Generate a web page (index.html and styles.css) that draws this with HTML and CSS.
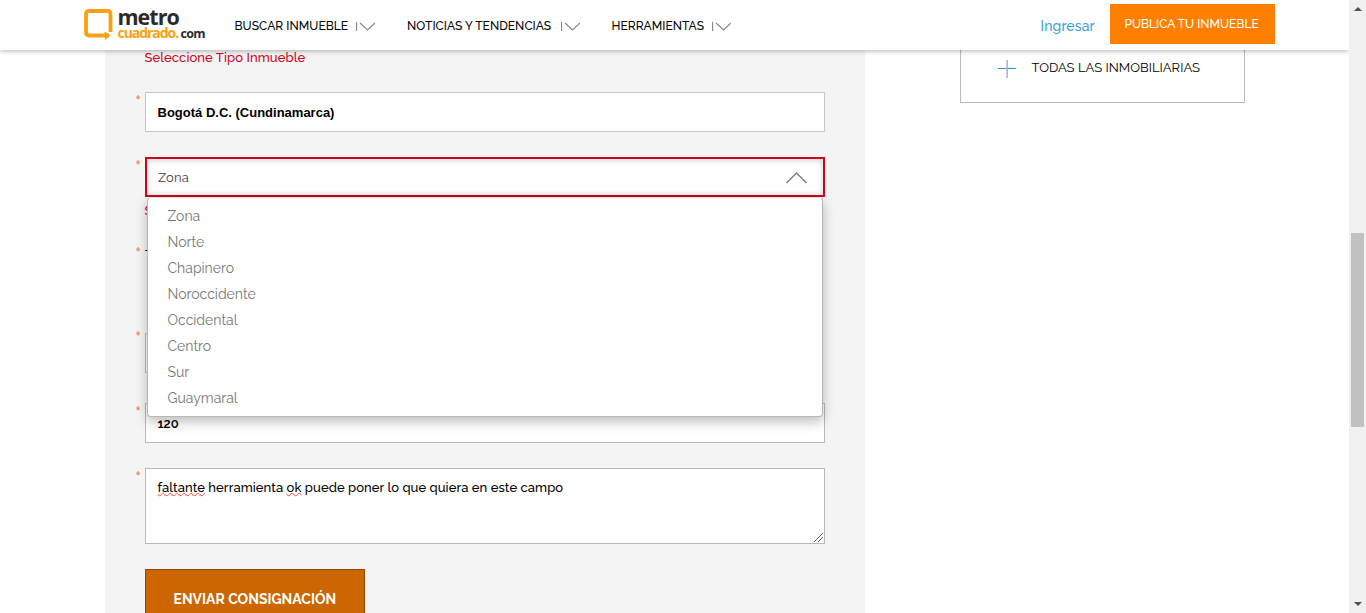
FILE: index.html
```html
<!DOCTYPE html>
<html lang="es">
<head>
<meta charset="utf-8">
<title>Metrocuadrado</title>
<link rel="stylesheet" href="styles.css">
</head>
<body>
<div class="page">
  <header class="header">
    <a class="logo">
      <svg class="logo-mark" width="30" height="32" viewBox="0 0 30 32"><path d="M25 27.500H5Q2 27.500 2 24.500V6Q2 3 5 3H23.500Q26.500 3 26.500 6V24" fill="none" stroke="#f9a113" stroke-width="3.800"/><path d="M20.500 23.500L26.500 27.500L21 32Z" fill="#f9a113"/></svg>
      <span class="logo-text"><span class="logo-top">metro</span><span class="logo-bottom"><span class="logo-orange">cuadrado.</span><span class="logo-com">com</span></span></span>
    </a>
    <nav class="nav">
      <a class="nav-item"><span class="nav-label nav-buscar">BUSCAR INMUEBLE</span><svg class="nav-arrow" width="19" height="10" viewBox="0 0 19 10"><path d="M.5 0V9M4 1L11.500 8L19 1" fill="none" stroke="#888" stroke-width="1.200"/></svg></a>
      <a class="nav-item"><span class="nav-label nav-noticias">NOTICIAS Y TENDENCIAS</span><svg class="nav-arrow" width="19" height="10" viewBox="0 0 19 10"><path d="M.5 0V9M4 1L11.500 8L19 1" fill="none" stroke="#888" stroke-width="1.200"/></svg></a>
      <a class="nav-item"><span class="nav-label nav-herramientas">HERRAMIENTAS</span><svg class="nav-arrow" width="19" height="10" viewBox="0 0 19 10"><path d="M.5 0V9M4 1L11.500 8L19 1" fill="none" stroke="#888" stroke-width="1.200"/></svg></a>
    </nav>
    <a class="login">Ingresar</a>
    <a class="publish">PUBLICA TU INMUEBLE</a>
  </header>
  <main class="content">
    <form class="form">
      <p class="error first-error">Seleccione Tipo Inmueble</p>
      <div class="row"><span class="req">*</span><div class="field city">Bogotá D.C. (Cundinamarca)</div></div>
      <div class="row zone-row"><span class="req">*</span>
        <div class="field zone"><span class="zone-value">Zona</span><svg width="23" height="13" viewBox="0 0 23 13"><path d="M1.500 12L11.500 2L21.500 12" fill="none" stroke="#7b7f8a" stroke-width="1.500"/></svg></div>
        <ul class="menu">
          <li>Zona</li><li>Norte</li><li>Chapinero</li><li>Noroccidente</li><li>Occidental</li><li>Centro</li><li>Sur</li><li>Guaymaral</li>
        </ul>
      </div>
      <p class="error zone-error">S</p>
      <div class="row type-row"><span class="req">*</span><span class="type-label">T</span></div>
      <div class="row price-row"><span class="req">*</span><div class="field price"></div></div>
      <div class="row area-row"><span class="req">*</span><div class="field"><span class="area-value">120</span></div></div>
      <div class="row"><span class="req">*</span><div class="field comments"><p class="comment-text"><span class="misspelled">faltante</span> herramienta <span class="misspelled">ok</span> puede poner lo que quiera en este campo</p><svg class="grip" width="9" height="9" viewBox="0 0 9 9"><path d="M0 9L9 0M4 9L9 4" stroke="#555" fill="none" stroke-width=".9"/></svg></div></div>
      <div class="submit"><span>ENVIAR CONSIGNACIÓN</span></div>
    </form>
    <aside class="agencies"><svg width="18" height="18" viewBox="0 0 18 18"><path d="M0 8.500H18" stroke="#29a0cf"/><path d="M8.500 0V18" stroke="#c9b5d3" stroke-opacity=".8"/><path d="M9.500 0V18" stroke="#61b3d4" stroke-opacity=".7"/></svg><span>TODAS LAS INMOBILIARIAS</span></aside>
  </main>
</div>
<div class="scrollbar"><span class="arrow-up"></span><span class="thumb"></span><span class="arrow-down"></span></div>
</body>
</html>
```

FILE: styles.css
```css
* { box-sizing: border-box; }
body { margin: 0; height: 613px; overflow: hidden; display: flex; background: #fff; color: #000; font-family: Raleway, Lato, sans-serif; font-size: 13px; }
p, ul { margin: 0; padding: 0; list-style: none; }
svg { display: block; flex: none; }
span, a { white-space: nowrap; }
.page { width: 1349px; height: 613px; overflow: hidden; }
.header { position: relative; z-index: 5; height: 50px; display: flex; background: #fff; box-shadow: 0 1px 5px rgba(0,0,0,.3); padding-left: 83.500px; }
.logo { display: flex; width: 151px; padding-top: 7.500px; }
.logo-text { display: flex; flex-direction: column; padding-left: 4px; font-family: "Open Sans", sans-serif; font-weight: 700; }
.logo-top { font-size: 21.500px; line-height: 18px; color: #2b2a29; letter-spacing: -1px; }
.logo-bottom { display: flex; align-items: baseline; font-size: 14px; line-height: 14px; letter-spacing: -1.050px; }
.logo-orange { color: #f9a113; width: 63px; }
.logo-com { color: #2b2a29; font-size: 12.500px; letter-spacing: -.7px; }
.nav { display: flex; gap: 32px; width: 806px; font-size: 12px; font-weight: 500; }
.nav-item { display: flex; height: 50px; padding-top: 17px; line-height: 19px; }
.nav-label { letter-spacing: .04px; }
.nav-arrow { margin: 5px 0 0 8px; }
.nav-buscar { width: 113.500px; }
.nav-noticias { width: 145.500px; }
.nav-herramientas { width: 92px; }
.login { width: 69.500px; padding-top: 16px; font-size: 14px; font-weight: 500; line-height: 20px; letter-spacing: .08px; color: #3d9fd1; }
.publish { width: 165px; height: 40px; margin-top: 4px; padding-left: 14.500px; font-size: 12px; font-weight: 500; line-height: 40px; color: #fff; background: #ff8000; }
.content { display: flex; align-items: flex-start; padding-left: 105px; }
.form { width: 760px; height: 563px; background: #f4f4f4; padding-left: 40px; }
.error { color: #d0021b; font-weight: 500; line-height: 16px; letter-spacing: .09px; }
.first-error { height: 42px; margin-left: -.5px; }
.row { position: relative; height: 65px; display: flex; }
.req { margin-left: -9px; width: 9px; padding-top: 1px; font: 700 8px/12px "Open Sans", sans-serif; color: #ff8055; }
.field { width: 680px; height: 40px; border: 1px solid #b9b9b9; background: #fff; padding-left: 11.500px; line-height: 39px; font-weight: 700; }
.city { font-family: "Liberation Sans", Arial, sans-serif; border-color: #c6c6c6; }
.price { width: 670px; }
.area-value { font-weight: 600; }
.zone-row { height: 46px; z-index: 3; }
.zone { border: 2px solid #d0021b; padding: 0 15px 0 11px; display: flex; align-items: center; justify-content: space-between; box-shadow: inset 0 1px 6px rgba(0,0,0,.2); font-weight: 400; color: #444; letter-spacing: .15px; }
.menu { position: absolute; left: 2px; top: 40px; width: 676px; height: 220px; padding: 5px 0 0 19.500px; border: 1px solid #b8b8b8; border-top-color: #ddd; border-radius: 4px; background: #fff; box-shadow: 0 5px 12px rgba(0,0,0,.25); }
.menu li { height: 26px; line-height: 26px; font-weight: 400; font-size: 14px; color: #777; }
.zone-error { height: 41px; margin-left: -.5px; }
.type-row { height: 89px; }
.type-label { line-height: 22px; font-weight: 500; }
.price-row { height: 70px; }
.price-row .req { margin-top: -5px; }
.comments { height: 76px; position: relative; font-weight: 500; letter-spacing: .07px; }
.comment-text { line-height: 16px; padding-top: 11px; white-space: nowrap; }
.misspelled { text-decoration: underline wavy #f44 .7px; text-decoration-skip-ink: none; text-underline-offset: 0; }
.grip { position: absolute; right: 1px; bottom: 1px; }
.submit { width: 220px; height: 60px; margin-top: 36px; border: 1px solid #904800; background: #c60; color: #fff; font-weight: 700; font-size: 14px; line-height: 58px; padding-left: 27.500px; }
.agencies { width: 285px; height: 53px; margin-left: 95px; border: 1px solid #b9b9b9; border-top: 0; display: flex; padding: 10px 0 0 37px; }
.agencies span { margin-left: 15.500px; line-height: 16px; letter-spacing: .03px; }
.scrollbar { width: 17px; height: 613px; background: #f1f1f1; display: flex; flex-direction: column; align-items: center; padding-top: 7px; }
.arrow-up, .arrow-down { border-left: 4px solid transparent; border-right: 4px solid transparent; }
.arrow-up { border-bottom: 4px solid #505050; }
.thumb { width: 13px; height: 194px; margin: 222px 0 175px; background: #c1c1c1; }
.arrow-down { border-top: 4px solid #505050; }
```
